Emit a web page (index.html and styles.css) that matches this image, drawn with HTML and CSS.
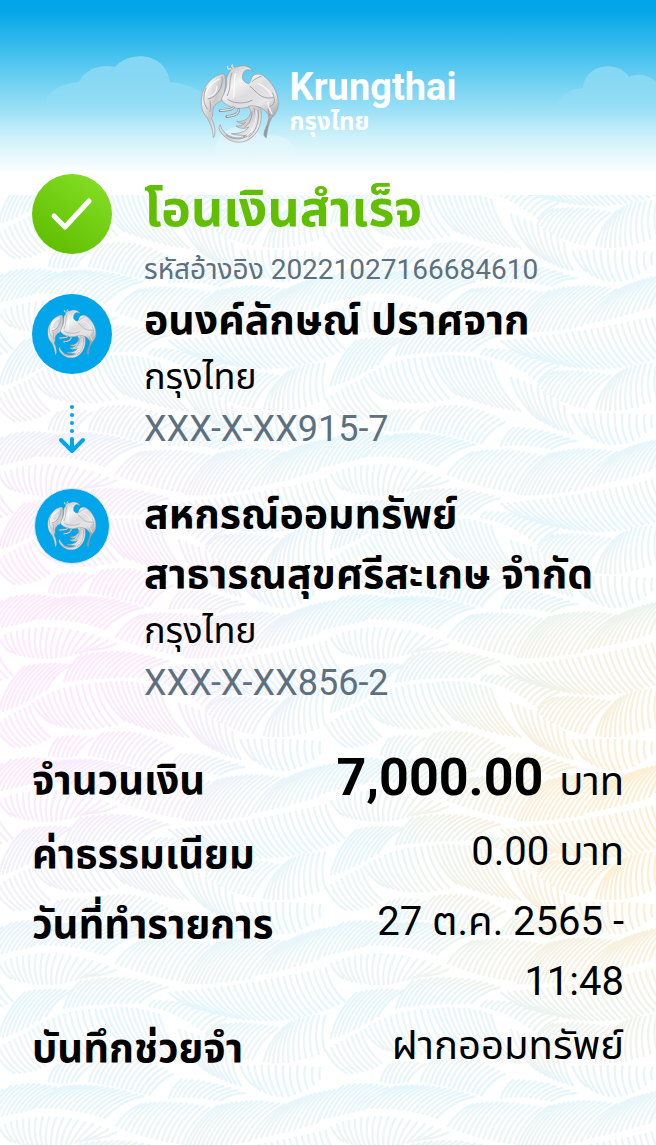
FILE: index.html
```html
<!DOCTYPE html>
<html lang="th">
  <head>
    <meta charset="UTF-8" />
    <meta name="viewport" content="width=device-width, initial-scale=1.0" />
    <title>โอนเงินสำเร็จ - Krungthai</title>

    <link rel="stylesheet" href="styles.css" />
  </head>
  <body>
    <!-- shared shapes -->
    <svg class="defs" aria-hidden="true">
      <defs>
        <linearGradient id="silver" x1="0" y1="0" x2="1" y2="1">
          <stop offset="0" stop-color="#b4b4b7" />
          <stop offset="0.25" stop-color="#f0f0f1" />
          <stop offset="0.5" stop-color="#c9c9cc" />
          <stop offset="0.75" stop-color="#ececed" />
          <stop offset="1" stop-color="#a0a0a4" />
        </linearGradient>
        <linearGradient id="silver-body" x1="0" y1="0" x2="0.5" y2="1">
          <stop offset="0" stop-color="#b9b9bc" />
          <stop offset="0.3" stop-color="#f4f4f5" />
          <stop offset="0.5" stop-color="#dcdcde" />
          <stop offset="0.7" stop-color="#e6e6e7" />
          <stop offset="1" stop-color="#98989c" />
        </linearGradient>
      </defs>
      <symbol id="bird" viewBox="28 25 240 240">
        <g stroke="#98989c" stroke-width="2" stroke-linejoin="round">
          <path fill="url(#silver)" d="M98 54C68 58 35 90 32 130C31 154 36 172 49 186C57 200 66 215 68 246C76 238 74 210 62 188C68 180 66 170 67 160C72 148 78 141 90 136C100 118 108 92 103 60Z" />
          <path fill="url(#silver-body)" d="M118 46C122 32 136 36 148 31C164 27 180 35 187 47C177 40 163 40 159 50C150 66 156 80 174 84C184 78 178 60 196 56C204 54 212 56 218 60C244 78 264 112 263 146C262 162 256 176 244 186C234 202 230 220 227 246C219 243 217 234 226 215C231 201 236 190 234 180C228 168 220 162 212 157C194 148 172 156 150 158C126 160 98 146 92 130C102 112 110 94 108 78C106 64 112 58 118 46Z" />
          <path fill="url(#silver)" d="M172 152C188 148 202 152 210 158C218 196 204 234 174 252C142 269 104 256 87 224C84 216 85 210 89 207C90 216 95 225 104 232C118 246 146 252 164 240C150 238 136 240 122 234C144 234 164 230 174 214C162 220 148 220 136 211C148 212 160 208 166 200C156 206 146 204 138 197C156 200 172 190 178 178C182 168 180 160 172 152Z" />
        </g>
        <g fill="none" stroke="#98989c" stroke-width="2.5" stroke-linecap="round">
          <path d="M94 64C100 90 80 126 52 130M58 136C60 146 60 156 58 168M46 98C36 122 38 144 50 160" />
          <path d="M212 62C202 66 194 68 184 78M178 92C196 104 208 134 246 126M246 112C256 134 250 148 238 152C228 160 236 170 236 180M112 132C138 148 168 142 184 134M124 52C114 76 122 94 110 120" />
          <path d="M190 158C202 190 192 226 158 244M202 164C208 196 196 228 174 244M184 168C184 190 176 204 162 214M108 240C134 256 164 252 180 232" />
        </g>
        <g fill="none" stroke="#fff" stroke-width="4" stroke-linecap="round" opacity="0.8">
          <path d="M86 70C68 78 48 96 44 116M78 92C80 110 66 122 54 122M134 54C128 78 134 100 128 126M204 84C226 96 240 110 242 120M196 166C198 196 190 220 170 238M234 140C226 148 240 164 244 174" />
        </g>
        <g fill="none" stroke="#8f8f93" stroke-width="8" stroke-linecap="round">
          <path d="M128 156C122 164 112 162 88 165M144 162C144 176 130 180 108 183" />
        </g>
        <g fill="none" stroke="#dededf" stroke-width="4" stroke-linecap="round">
          <path d="M128 156C122 164 112 162 90 164M144 162C144 176 130 180 110 182M120 39C112 43 109 36 111 32M128 36C122 34 122 29 126 28" />
        </g>
      </symbol>
    </svg>

    <main class="slip">
      <svg class="waves" aria-hidden="true">
        <defs>
          <pattern id="leaves" x="-8" y="-18" width="332" height="163" patternUnits="userSpaceOnUse">
            <g id="leaf-tile"></g>
          </pattern>
          <linearGradient id="tone" x1="0" y1="0" x2="0" y2="81" gradientUnits="userSpaceOnUse" spreadMethod="repeat">
            <stop offset="0" stop-color="#e4f6fd" />
            <stop offset="0.35" stop-color="#ebf6f8" />
            <stop offset="0.65" stop-color="#eff4f3" />
            <stop offset="1" stop-color="#e4f6fd" />
          </linearGradient>
          <radialGradient id="pink" cx="20" cy="450" r="310" gradientUnits="userSpaceOnUse">
            <stop offset="0.3" stop-color="#fdeafc" />
            <stop offset="1" stop-color="#fdeafc" stop-opacity="0" />
          </radialGradient>
          <radialGradient id="orange" cx="650" cy="630" r="280" gradientUnits="userSpaceOnUse">
            <stop offset="0.2" stop-color="#fdefd4" />
            <stop offset="1" stop-color="#fdefd4" stop-opacity="0" />
          </radialGradient>
          <mask id="leaf-mask" maskUnits="userSpaceOnUse" x="0" y="0" width="100%" height="100%">
            <rect width="100%" height="100%" fill="url(#leaves)" />
          </mask>
        </defs>
        <g mask="url(#leaf-mask)">
          <rect width="100%" height="100%" fill="url(#tone)" />
          <rect width="100%" height="100%" fill="url(#pink)" />
          <rect width="100%" height="100%" fill="url(#orange)" />
        </g>
      </svg>

      <header class="header">
        <svg class="clouds" viewBox="0 0 656 175" preserveAspectRatio="xMidYMin slice" aria-hidden="true">
          <defs>
            <linearGradient id="cloud" x1="0" y1="55" x2="0" y2="108" gradientUnits="userSpaceOnUse">
              <stop offset="0" stop-color="#fff" stop-opacity="0.35" />
              <stop offset="1" stop-color="#fff" stop-opacity="0" />
            </linearGradient>
            <linearGradient id="cloud-low" x1="0" y1="128" x2="0" y2="160" gradientUnits="userSpaceOnUse">
              <stop offset="0" stop-color="#fff" stop-opacity="0.35" />
              <stop offset="1" stop-color="#fff" stop-opacity="0" />
            </linearGradient>
          </defs>
          <path fill="url(#cloud)" d="M46 108C44 92 60 84 79 82C86 68 102 64 115 67C130 50 166 52 170 82C190 84 210 92 212 108Z" />
          <path fill="url(#cloud)" d="M556 108C558 96 570 89 583 88C584 66 616 58 629 77C640 72 650 76 656 82V108Z" />
          <path fill="url(#cloud-low)" d="M214 160C214 138 224 128 237 127C250 127 258 134 262 136C284 132 298 144 300 160Z" />
        </svg>
        <div class="brand">
          <svg class="brand-bird" aria-hidden="true"><use href="#bird" /></svg>
          <div class="brand-name">
            <span class="brand-en">Krungthai</span>
            <span class="brand-th">กรุงไทย</span>
          </div>
        </div>
      </header>

      <section class="row status">
        <div class="icon icon-done">
          <svg viewBox="0 0 80 80" aria-hidden="true"><path d="M22 42L33 53L57 27" /></svg>
        </div>
        <div>
          <h1 class="title">โอนเงินสำเร็จ</h1>
          <p class="ref">รหัสอ้างอิง 20221027166684610</p>
        </div>
      </section>

      <section class="row sender">
        <div class="side">
          <div class="icon"><svg class="bird" aria-hidden="true"><use href="#bird" /></svg></div>
          <svg class="arrow" viewBox="0 0 28 50" aria-hidden="true">
            <g fill="#00a6e9">
              <circle cx="14" cy="3" r="2" />
              <circle cx="14" cy="11" r="2" />
              <circle cx="14" cy="19" r="2" />
              <circle cx="14" cy="27" r="2" />
            </g>
            <path d="M14 35V47M3 36L14 47L25 36" />
          </svg>
        </div>
        <div>
          <h2 class="name">อนงค์ลักษณ์ ปราศจาก</h2>
          <p class="bank">กรุงไทย</p>
          <p class="account">XXX-X-XX915-7</p>
        </div>
      </section>

      <section class="row receiver">
        <div class="side">
          <div class="icon icon-small"><svg class="bird" aria-hidden="true"><use href="#bird" /></svg></div>
        </div>
        <div>
          <h2 class="name">สหกรณ์ออมทรัพย์สาธารณสุขศรีสะเกษ จำกัด</h2>
          <p class="bank">กรุงไทย</p>
          <p class="account">XXX-X-XX856-2</p>
        </div>
      </section>

      <dl class="details">
        <div class="detail detail-total">
          <dt>จำนวนเงิน</dt>
          <dd><strong class="amount">7,000.00</strong> บาท</dd>
        </div>
        <div class="detail">
          <dt>ค่าธรรมเนียม</dt>
          <dd>0.00 บาท</dd>
        </div>
        <div class="detail">
          <dt>วันที่ทำรายการ</dt>
          <dd>27 ต.ค. 2565 - 11:48</dd>
        </div>
        <div class="detail">
          <dt>บันทึกช่วยจำ</dt>
          <dd>ฝากออมทรัพย์</dd>
        </div>
      </dl>
    </main>

    <script src="waves.js"></script>
  </body>
</html>
```
FILE: styles.css
```css
* {
  padding: 0;
  margin: 0;
  box-sizing: border-box;
}

body {
  background-color: #fff;
  color: #000;
  font-family: Roboto, "Noto Sans Thai", "Noto Sans", sans-serif;
}

.defs {
  position: absolute;
  width: 0;
  height: 0;
}

.slip {
  position: relative;
  min-height: 100vh;
  padding-bottom: 60px;
  overflow: hidden;
}

/* leaf pattern behind the whole slip, starts under the sky */
.waves {
  position: absolute;
  top: 195px;
  left: 0;
  width: 100%;
  height: calc(100% - 195px);
  z-index: -1;
}

.header {
  position: relative;
  height: 174px;
  padding-top: 64px;
  background: linear-gradient(
    #00a4e8 0,
    #06a7e8 12px,
    #30b9ec 42px,
    #65cdf1 75px,
    #98dff6 108px,
    #cff1fa 138px,
    #fff 174px
  );
}

.clouds {
  position: absolute;
  top: 0;
  left: 0;
  width: 100%;
  height: 100%;
}

.brand {
  position: relative;
  display: flex;
  justify-content: center;
  gap: 10px;
}

.brand-bird {
  width: 80px;
  height: 80px;
}

.brand-name {
  display: flex;
  flex-direction: column;
  color: #fff;
  font-weight: 700;
}

.brand-en {
  font-size: 38px;
  line-height: 46px;
}

.brand-th {
  font-size: 24px;
  line-height: 24px;
}

.row {
  display: grid;
  grid-template-columns: 80px 1fr;
  column-gap: 32px;
  padding: 0 32px;
}

.side {
  display: flex;
  flex-direction: column;
  align-items: center;
  padding-top: 4px;
}

.icon {
  width: 80px;
  height: 80px;
  border-radius: 50%;
  background-color: #00a6e9;
  display: flex;
  align-items: center;
  justify-content: center;
}

.icon-small {
  width: 76px;
  height: 76px;
  border: 1px solid #d5eaf2;
}

.icon-done {
  background: linear-gradient(215deg, #88e229, #5fbd00 90%);
}

.icon-done path {
  fill: none;
  stroke: #fff;
  stroke-width: 5;
  stroke-linecap: round;
  stroke-linejoin: round;
}

.bird {
  width: 50px;
  height: 50px;
}

.arrow {
  width: 28px;
  height: 50px;
  margin-top: 30px;
}

.arrow path {
  fill: none;
  stroke: #00a6e9;
  stroke-width: 4;
  stroke-linecap: round;
  stroke-linejoin: round;
}

.title {
  color: #62be00;
  font-size: 50px;
  line-height: 70px;
  font-weight: 700;
  margin-bottom: 6px;
}

.ref {
  color: #5d7080;
  font-size: 28px;
  line-height: 40px;
}

.name {
  font-size: 41px;
  line-height: 60px;
  font-weight: 700;
}

.bank {
  font-size: 36px;
  line-height: 54px;
}

.account {
  color: #5d7080;
  font-size: 36px;
  line-height: 50px;
}

.receiver {
  margin-top: 30px;
}

.details {
  margin-top: 40px;
  padding: 0 32px;
}

.detail {
  display: flex;
  justify-content: space-between;
  margin-bottom: 4px;
}

.detail-total {
  min-height: 70px;
}

.detail dt {
  font-size: 40px;
  line-height: 66px;
  font-weight: 700;
}

.detail dd {
  max-width: 50%;
  font-size: 40px;
  line-height: 60px;
  text-align: right;
}

.amount {
  font-size: 52px;
  margin-right: 6px;
}
```
FILE: waves.js
```js
// Each leaf: top edge (x0 y0 cx cy x1 y1), bottom edge (same), number of veins, lean.
// lean 1 is "/", lean -1 is "\". Units are a third of a pixel.
const leaves = [
  [[120, 110, 200, 55, 310, 50], [180, 172, 260, 205, 378, 178], 12, -1],
  [[325, 50, 410, 35, 500, 65], [400, 165, 500, 205, 592, 215], 12, -1],
  [[560, 110, 640, 130, 720, 195], [640, 235, 690, 270, 748, 282], 9, -1],
  [[745, 220, 860, 215, 985, 225], [790, 285, 880, 355, 985, 265], 12, -1],
  [[690, 95, 770, 85, 860, 105], [640, 140, 700, 190, 780, 205], 12, 1],
  [[870, 112, 900, 70, 1000, 68], [815, 210, 890, 225, 1000, 180], 12, 1],
  [[490, 25, 600, 25, 705, 78], [470, 45, 560, 60, 640, 128], 13, 1],
  [[530, 0, 780, -20, 1000, -75], [640, 55, 850, 130, 1060, 30], 26, -1],
  [[100, 0, 170, -15, 240, -5], [20, 140, 70, 130, 160, 75], 10, 1],
  [[270, -35, 400, -60, 530, -15], [215, 50, 300, 35, 440, 35], 15, 1],
  [[5, 175, 60, 140, 110, 118], [70, 245, 130, 245, 175, 215], 8, -1],
  [[200, 215, 240, 200, 305, 215], [170, 270, 210, 280, 250, 270], 7, 1],
  [[335, 200, 440, 180, 545, 245], [290, 270, 380, 285, 470, 312], 14, 1],
  [[570, 262, 650, 260, 760, 303], [530, 320, 600, 310, 680, 328], 11, 1],
  [[220, 282, 330, 270, 455, 312], [125, 350, 240, 345, 335, 380], 15, 1],
  [[60, 280, 140, 265, 210, 290], [-15, 385, 50, 370, 115, 355], 10, 1],
  [[20, 402, 170, 335, 375, 420], [60, 450, 170, 490, 290, 440], 18, -1],
  [[450, 335, 540, 320, 655, 345], [370, 405, 470, 445, 570, 458], 14, 1],
  [[680, 340, 770, 315, 880, 335], [580, 465, 650, 470, 770, 450], 14, 1],
  [[900, 330, 960, 300, 1045, 290], [790, 440, 880, 425, 975, 395], 12, 1],
];

const TILE_W = 996;
const TILE_H = 489;
const SVG = "http://www.w3.org/2000/svg";

function pointOn(e, t) {
  const u = 1 - t;
  return [
    u * u * e[0] + 2 * u * t * e[2] + t * t * e[4],
    u * u * e[1] + 2 * u * t * e[3] + t * t * e[5],
  ];
}

let d = "";
leaves.forEach(([top, bottom, count, lean]) => {
  for (let i = 0; i < count; i++) {
    const [ax, ay] = pointOn(top, i / (count - 1));
    const [bx, by] = pointOn(bottom, i / (count - 1));
    const cx = (ax + bx) / 2 - 0.16 * (by - ay);
    const cy = (ay + by) / 2 - 0.16 * lean * Math.abs(bx - ax);
    d += `M${ax.toFixed(1)} ${ay.toFixed(1)}Q${cx.toFixed(1)} ${cy.toFixed(1)} ${bx.toFixed(1)} ${by.toFixed(1)}`;
  }
});

// repeat around the tile so that leaves crossing an edge join up
const tile = document.getElementById("leaf-tile");
tile.setAttribute("transform", "scale(0.33333)");
for (const dx of [-TILE_W, 0, TILE_W]) {
  for (const dy of [-TILE_H, 0, TILE_H]) {
    const path = document.createElementNS(SVG, "path");
    path.setAttribute("d", d);
    path.setAttribute("transform", `translate(${dx} ${dy})`);
    path.setAttribute("fill", "none");
    path.setAttribute("stroke", "#fff");
    path.setAttribute("stroke-width", "7");
    tile.appendChild(path);
  }
}
```
